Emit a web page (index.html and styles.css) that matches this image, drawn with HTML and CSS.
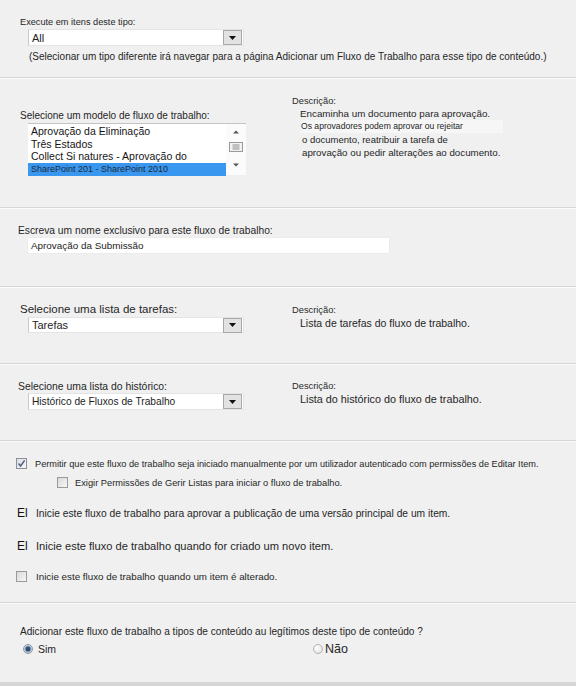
FILE: index.html
```html
<!DOCTYPE html>
<html lang="pt">
<head>
<meta charset="utf-8">
<title>Adicionar um Fluxo de Trabalho</title>
<link rel="stylesheet" href="styles.css">
</head>
<body>
<div class="page">

  <section class="sec s1">
    <div class="lbl l1">Execute em itens deste tipo:</div>
    <div class="select sel-all">
      <span class="val v-all">All</span>
      <span class="btn"><svg width="7" height="4" viewBox="0 0 7 4"><path d="M0 0H7L3.5 4Z" fill="#111"/></svg></span>
    </div>
    <div class="note">(Selecionar um tipo diferente irá navegar para a página Adicionar um Fluxo de Trabalho para esse tipo de conteúdo.)</div>
  </section>

  <section class="sec s2 two">
    <div class="left">
      <div class="lbl">Selecione um modelo de fluxo de trabalho:</div>
      <div class="listbox">
        <div class="items">
          <div class="item">Aprovação da Eliminação</div>
          <div class="item">Três Estados</div>
          <div class="item">Collect Si natures - Aprovação do</div>
          <div class="item selected">SharePoint 201 - SharePoint 2010</div>
        </div>
        <div class="scroll">
          <svg width="20" height="52" viewBox="0 0 20 52">
            <path d="M7 9.5H13L10 6.5Z" fill="#555"/>
            <rect x="3.5" y="18.5" width="13" height="9" fill="#f2f2f2" stroke="#9a9a9a"/>
            <path d="M6.5 21H13.5M6.5 23H13.5M6.5 25H13.5" stroke="#777" stroke-width="0.8"/>
            <path d="M7 39.5H13L10 42.5Z" fill="#555"/>
          </svg>
        </div>
      </div>
    </div>
    <div class="right r2">
      <div class="dlbl">Descrição:</div>
      <div class="dtext">
        <div class="d-a">Encaminha um documento para aprovação.</div>
        <div class="d-b"><span class="hl">Os aprovadores podem aprovar ou rejeitar</span></div>
        <div class="d-c">o documento, reatribuir a tarefa de</div>
        <div class="d-d">aprovação ou pedir alterações ao documento.</div>
      </div>
    </div>
  </section>

  <section class="sec s3">
    <div class="lbl l3">Escreva um nome exclusivo para este fluxo de trabalho:</div>
    <div class="input">Aprovação da Submissão</div>
  </section>

  <section class="sec s4 two">
    <div class="left">
      <div class="lbl big">Selecione uma lista de tarefas:</div>
      <div class="select sel-t">
        <span class="val v-big">Tarefas</span>
        <span class="btn"><svg width="7" height="4" viewBox="0 0 7 4"><path d="M0 0H7L3.5 4Z" fill="#111"/></svg></span>
      </div>
    </div>
    <div class="right r4">
      <div class="dlbl">Descrição:</div>
      <div class="dtext single">Lista de tarefas do fluxo de trabalho.</div>
    </div>
  </section>

  <section class="sec s5 two">
    <div class="left">
      <div class="lbl l5">Selecione uma lista do histórico:</div>
      <div class="select sel-h">
        <span class="val v-h">Histórico de Fluxos de Trabalho</span>
        <span class="btn"><svg width="7" height="4" viewBox="0 0 7 4"><path d="M0 0H7L3.5 4Z" fill="#111"/></svg></span>
      </div>
    </div>
    <div class="right r5">
      <div class="dlbl">Descrição:</div>
      <div class="dtext single s5t">Lista do histórico do fluxo de trabalho.</div>
    </div>
  </section>

  <section class="sec s6">
    <div class="row r-1">
      <span class="cb checked"><svg width="9" height="9" viewBox="0 0 9 9"><path d="M1.5 4.5L3.6 7L7.6 1.4" fill="none" stroke="#4b5d86" stroke-width="1.5"/></svg></span>
      <span class="t t-1">Permitir que este fluxo de trabalho seja iniciado manualmente por um utilizador autenticado com permissões de Editar Item.</span>
    </div>
    <div class="row r-2">
      <span class="cb"></span>
      <span class="t t-2">Exigir Permissões de Gerir Listas para iniciar o fluxo de trabalho.</span>
    </div>
    <div class="row r-3">
      <span class="el">El</span>
      <span class="t t-3">Inicie este fluxo de trabalho para aprovar a publicação de uma versão principal de um item.</span>
    </div>
    <div class="row r-4">
      <span class="el">El</span>
      <span class="t t-4">Inicie este fluxo de trabalho quando for criado um novo item.</span>
    </div>
    <div class="row r-5">
      <span class="cb"></span>
      <span class="t t-5">Inicie este fluxo de trabalho quando um item é alterado.</span>
    </div>
  </section>

  <section class="sec s7">
    <div class="lbl l7">Adicionar este fluxo de trabalho a tipos de conteúdo au legítimos deste tipo de conteúdo ?</div>
    <div class="radios">
      <label class="radio-opt"><span class="rb on"></span><span class="rt">Sim</span></label>
      <label class="radio-opt"><span class="rb"></span><span class="rt big-r">Não</span></label>
    </div>
  </section>

  <div class="band"></div>
</div>
</body>
</html>
```

FILE: styles.css
```css
* { box-sizing: border-box; }
html, body { margin: 0; padding: 0; }
body {
  background: #f0f0f0;
  font-family: "Liberation Sans", Arial, sans-serif;
  color: #262626;
  width: 576px;
  height: 686px;
  overflow: hidden;
}
.page { display: flex; flex-direction: column; }

.sec {
  border-bottom: 1px solid #d7d7d7;
  box-shadow: 0 1px 0 #fbfbfb;
  padding-left: 20px;
  flex: none;
}
.two { display: grid; grid-template-columns: 272px 1fr; }

.lbl { font-size: 10px; line-height: 13px; white-space: nowrap; }
.lbl.l1 { font-size: 9.2px; }
.lbl.big { font-size: 11.5px; line-height: 14px; }

/* dropdowns */
.select {
  display: flex;
  align-items: center;
  margin-left: 8px;
  width: 216px;
  height: 17px;
  background: #fff;
  border: 1px solid #e4e4e4;
  border-left-color: #c9c9c9;
}
.select .val { flex: 1; padding-left: 3px; font-size: 11px; white-space: nowrap; color: #1e1e1e; }
.select .val.v-big { font-size: 11px; }
.select .val.v-h { font-size: 10.2px; }
.select .btn {
  width: 19px;
  height: 15px;
  margin-right: 1px;
  border: 1px solid #a8a8a8;
  background: #e2e2e2;
  display: flex;
  align-items: center;
  justify-content: center;
}

/* section 1 */
.s1 { height: 78px; padding-top: 16px; }
.note { margin: 5px 0 0 9px; font-size: 10px; line-height: 12px; white-space: nowrap; }

/* section 2 */
.s2 { height: 130px; }
.s2 .left { padding-top: 31px; }
.listbox {
  display: flex;
  margin-left: 8px;
  margin-top: 1px;
  width: 218px;
  height: 52px;
  background: #fff;
  border-top: 1px solid #c4c4c4;
}
.items { width: 198px; padding-top: 1px; }
.item { font-size: 10.5px; line-height: 12.5px; padding-left: 3px; white-space: nowrap; color: #151515; }
.item.selected {
  background: #3a97f0;
  font-size: 9px;
  line-height: 13.5px;
  color: #1c2a3a;
}
.scroll { width: 20px; height: 51px; background: #fbfbfb; }

.right { font-size: 10px; }
.dlbl { font-size: 9.3px; line-height: 12px; color: #2a2a2a; }
.dtext { padding-left: 8px; }
.r2 { padding-top: 17px; }
.d-a { font-size: 9.8px; line-height: 13px; }
.d-b { font-size: 8.6px; line-height: 13px; padding-left: 1px; }
.d-b .hl { display: inline-block; background: #f6f6f6; padding-right: 40px; }
.d-c { font-size: 9.5px; line-height: 13px; padding-left: 2px; }
.d-d { font-size: 9.75px; line-height: 13px; padding-left: 2px; }
.dtext.single { font-size: 10.5px; line-height: 15px; }
.dtext.single.s5t { font-size: 10.8px; }

/* section 3 */
.s3 { height: 79px; padding-top: 16px; padding-left: 18px; }
.lbl.l3 { font-size: 10.25px; }
.input {
  margin-left: 9px;
  width: 363px;
  height: 17px;
  background: #fff;
  border: 1px solid #ececec;
  font-size: 9.9px;
  line-height: 15px;
  padding-left: 3px;
  color: #222;
}

/* section 4 */
.s4 { height: 77px; }
.s4 .left { padding-top: 15px; }
.select.sel-t { height: 16px; margin-top: 1px; }
.r4 { padding-top: 17px; }

/* section 5 */
.s5 { height: 77px; }
.s5 .left { padding-top: 16px; }
.lbl.l5 { margin-left: -2px; font-size: 10.4px; }
.r5 { padding-top: 16px; }

/* section 6 */
.s6 { height: 162px; padding-left: 16px; padding-top: 17px; display: flex; flex-direction: column; }
.row { display: flex; align-items: center; white-space: nowrap; }
.cb {
  width: 11px;
  height: 11px;
  border: 1px solid #9a9a9a;
  background: linear-gradient(135deg, #d9d9d9, #f7f7f7);
  display: flex;
  align-items: center;
  justify-content: center;
  flex: none;
}
.cb.checked { border-color: #8a8f98; background: linear-gradient(135deg, #dedfe3, #f5f5f7); }
.t { color: #262626; }
.r-1 { height: 11px; }
.r-1 .t { font-size: 9.2px; margin-left: 8px; }
.r-2 { height: 11px; margin-top: 8px; margin-left: 41px; }
.r-2 .t { font-size: 9.3px; margin-left: 7px; }
.r-3 { height: 14px; margin-top: 18px; }
.el { font-size: 12px; width: 19px; margin-left: 1px; color: #111; flex: none; }
.r-3 .t { font-size: 10.25px; }
.r-4 { height: 14px; margin-top: 19px; }
.r-4 .t { font-size: 11.1px; }
.r-5 { height: 11px; margin-top: 18px; }
.r-5 .t { font-size: 9.8px; margin-left: 9px; }

/* section 7 */
.s7 { height: 80px; padding-top: 23px; }
.lbl.l7 { font-size: 10.1px; line-height: 12px; }
.radios { display: grid; grid-template-columns: 290px 1fr; margin-top: 4px; margin-left: 3px; }
.radio-opt { display: flex; align-items: center; height: 14px; }
.rb {
  width: 10px;
  height: 10px;
  border-radius: 50%;
  border: 1px solid #b4b4b4;
  background: radial-gradient(circle at 35% 35%, #ffffff, #dcdcdc);
  flex: none;
}
.rb.on {
  border-color: #8d98a8;
  background: radial-gradient(circle at 50% 50%, #2d4d72 0, #2d4d72 2px, #7d93ad 2.6px, #d8dde4 4px);
}
.rt { font-size: 10.5px; margin-left: 5px; }
.rt.big-r { font-size: 12.5px; margin-left: 2px; }

.band { height: 3px; background: #d6d6d6; flex: none; }
```
